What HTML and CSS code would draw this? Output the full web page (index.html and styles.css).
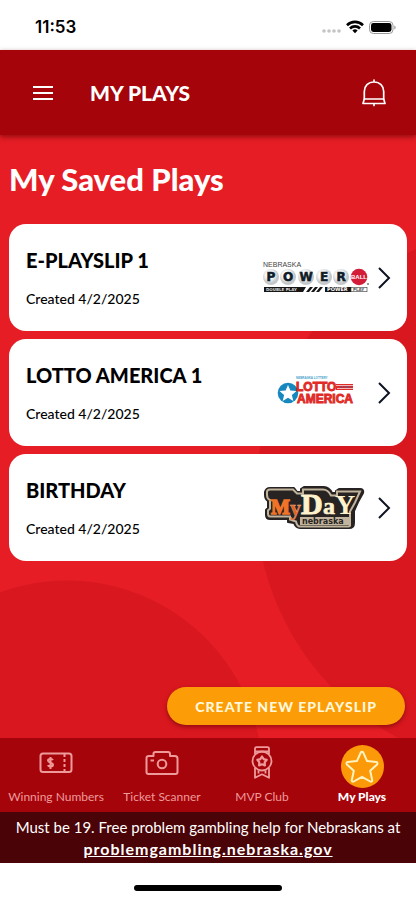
FILE: index.html
```html
<!DOCTYPE html>
<html lang="en">
<head>
    <meta charset="UTF-8">
    <meta name="viewport" content="width=device-width, initial-scale=1.0">
    <title>My Plays</title>
    <link rel="stylesheet" href="styles.css">
</head>
<body>
    <div class="status-bar">
        <span class="time">11:53</span>
        <div class="status-icons">
            <svg width="20" height="16" viewBox="0 0 20 16" fill="#c4c4c4">
                <circle cx="3" cy="12" r="1.8"/><circle cx="8" cy="12" r="1.8"/><circle cx="13" cy="12" r="1.8"/><circle cx="18" cy="12" r="1.8"/>
            </svg>
            <svg width="18" height="14" viewBox="0 0 18 14" fill="none" stroke="#000" stroke-width="2.6">
                <path d="M1 5.2a11.4 11.4 0 0 1 16 0"/>
                <path d="M4 8.5a7 7 0 0 1 10 0"/>
                <path d="M9 13.2L6.4 10.6a3.7 3.7 0 0 1 5.2 0z" fill="#000" stroke="none"/>
            </svg>
            <svg width="27" height="13" viewBox="0 0 27 13">
                <rect x=".5" y=".5" width="23.5" height="12" rx="3.8" fill="none" stroke="#999"/>
                <rect x="2" y="2" width="20.5" height="9" rx="2.4"/>
                <path d="M25.3 4.5v4c.8-.3 1.3-1.1 1.3-2s-.5-1.7-1.3-2z" fill="#999"/>
            </svg>
        </div>
    </div>

    <header class="header">
        <button class="icon-btn" aria-label="Menu">
            <svg width="20" height="14" viewBox="0 0 20 14" stroke="#fff" stroke-width="2">
                <path d="M0 1h20M0 7h20M0 13h20"/>
            </svg>
        </button>
        <h1>MY PLAYS</h1>
        <button class="icon-btn" aria-label="Notifications">
            <svg width="24" height="28" viewBox="0 0 24 28" fill="none" stroke="#fff" stroke-width="1.7" stroke-linejoin="round" stroke-linecap="round">
                <path d="M12 1v2M2.3 20v-7.500C2.300 7 6.200 3 12 3s9.700 4 9.700 9.500V20z"/>
                <path d="M2.300 20L1 24.500h22L21.700 20M12 25v1.500"/>
            </svg>
        </button>
    </header>

    <main class="content">
        <h2>My Saved Plays</h2>
        <ul class="plays">
            <li>
                <a class="card" href="#">
                    <div class="info">
                        <h3>E-PLAYSLIP 1</h3>
                        <p>Created 4/2/2025</p>
                    </div>
                    <svg class="logo" width="108" height="46" viewBox="0 0 108 46" role="img" aria-label="Nebraska Powerball">
                        <defs>
                            <radialGradient id="ball" cx=".42" cy=".38">
                                <stop offset=".45" stop-color="#fff"/>
                                <stop offset="1" stop-color="#c3c7ca"/>
                            </radialGradient>
                        </defs>
                        <text x="1" y="12" font-size="7" fill="#444">NEBRASKA</text>
                        <g fill="url(#ball)">
                            <circle cx="9" cy="22" r="8"/><circle cx="26" cy="22" r="8"/><circle cx="44" cy="22" r="8"/><circle cx="62" cy="22" r="8"/><circle cx="79" cy="22" r="8"/>
                        </g>
                        <g class="logo-wide" font-size="12" fill="#101c28" stroke="#101c28" stroke-width=".6" text-anchor="middle">
                            <text x="9" y="26">P</text><text x="26" y="26">O</text><text x="44" y="26">W</text><text x="62" y="26">E</text><text x="79" y="26">R</text>
                        </g>
                        <circle cx="97" cy="22" r="8.3" fill="#d31c37"/>
                        <text class="logo-heavy" x="97" y="24" font-size="6" fill="#fff" text-anchor="middle">BALL</text>
                        <circle cx="106" cy="29" r="1" fill="#777"/>
                        <path d="M2 32h42l-3 5H2z" fill="#151515"/>
                        <path d="M48 32h3l-4 5h-3zM53 32h3l-4 5h-3zM58 32h3l-4 5h-3z" fill="#151515"/>
                        <rect x="63" y="32" width="26" height="5" fill="#151515"/>
                        <rect x="89" y="32.3" width="16" height="4.400" fill="#fff" stroke="#333" stroke-width=".6"/>
                        <text class="logo-wide" x="4" y="36" font-size="4" fill="#ddd">DOUBLE PLAY</text>
                        <text class="logo-wide" x="65" y="36" font-size="5" fill="#fff">POWER</text>
                        <text class="logo-wide" x="91" y="36" font-size="4" fill="#555">PLAY</text>
                    </svg>
                    <svg class="chevron" width="14" height="22" viewBox="0 0 14 22"><path d="M2 1l10 10L2 21"/></svg>
                </a>
            </li>
            <li>
                <a class="card" href="#">
                    <div class="info">
                        <h3>LOTTO AMERICA 1</h3>
                        <p>Created 4/2/2025</p>
                    </div>
                    <svg class="logo" width="108" height="46" viewBox="0 0 108 46" role="img" aria-label="Lotto America">
                        <text class="logo-heavy" x="34" y="9" font-size="3" fill="#4aa3cc">NEBRASKA LOTTERY</text>
                        <circle cx="26" cy="23" r="10.3" fill="#1688bf"/>
                        <path d="M26 15l2.400 5.500 6.100.5-4.600 4 1.400 6-5.300-3.200-5.300 3.200 1.400-6-4.600-4 6.100-.5z" fill="#fff"/>
                        <g class="logo-heavy" fill="#e02b27" stroke="#e02b27" stroke-width=".9" font-size="12">
                            <text x="34" y="21">LOTTO</text>
                            <text x="35" y="33">AMERICA</text>
                        </g>
                        <path d="M74 14h17v6H74z" fill="#e02b27"/>
                        <path d="M74 15.500h17M75 18.500h16" stroke="#f3b9ba"/>
                        <path d="M78 17h12" stroke="#485b91" stroke-dasharray="2 1"/>
                    </svg>
                    <svg class="chevron" width="14" height="22" viewBox="0 0 14 22"><path d="M2 1l10 10L2 21"/></svg>
                </a>
            </li>
            <li>
                <a class="card" href="#">
                    <div class="info">
                        <h3>BIRTHDAY</h3>
                        <p>Created 4/2/2025</p>
                    </div>
                    <svg class="logo" width="108" height="46" viewBox="0 0 108 46" role="img" aria-label="MyDay Nebraska">
                        <path d="M8 3h24l3 4h4V4l3-2h20q5 0 8 6h4V6l3-2h21q4 0 3 4l-5 9-4 9v12q0 5-5 5H38q-4 0-6-5l-6-1v-3H8q-4 0-4-4v-5l2-2V16q-3-2-3-6V7q1-4 5-4z" fill="#272323" stroke="#272323" stroke-width="2" stroke-linejoin="round"/>
                        <path d="M8 4.500h23l4 4h6V4.500h20q5 0 8 6h6v-4h23l-5 11-5 9v14q0 1-3 1H38q-3 0-4-5l-6-2v-3H8q-2 0-2-3v-3l2-2V15q-3-1-3-5V7q0-2.500 3-2.500z" fill="none" stroke="#c2b49c" stroke-width="2"/>
                        <g class="logo-serif">
                            <text x="9" y="29" font-size="20" fill="#f07328" stroke="#f07328" stroke-width="1.4">M</text>
                            <text x="28" y="30" font-size="22" fill="#e06222" stroke="#f3b58c" stroke-width=".4">y</text>
                            <text x="39" y="29" font-size="30" fill="#fff2cc" stroke="#fff2cc">D</text>
                            <text x="61" y="29" font-size="24" fill="#fff2cc" stroke="#fff2cc" stroke-width=".6">a</text>
                            <text x="73" y="29" font-size="28" fill="#fff2cc">Y</text>
                        </g>
                        <rect x="38" y="32" width="50" height="8" fill="#c2b49c"/>
                        <text class="logo-wide" x="40" y="39" font-size="8" fill="#272323">nebraska</text>
                    </svg>
                    <svg class="chevron" width="14" height="22" viewBox="0 0 14 22"><path d="M2 1l10 10L2 21"/></svg>
                </a>
            </li>
        </ul>
        <button class="create-btn">CREATE NEW EPLAYSLIP</button>
    </main>

    <nav class="tabs">
        <a class="tab" href="#">
            <span class="tab-icon">
                <svg width="34" height="30" viewBox="0 0 34 30" fill="none" stroke="currentColor" stroke-width="2">
                    <rect x="1.500" y="1.500" width="31" height="18.500" rx="2.500"/>
                    <path d="M25.500 2v18" stroke-dasharray="3 2"/>
                    <path d="M14 8c-1-1.500-5-1.500-5 .6 0 2.400 5 1.600 5 4.200 0 2.300-4.200 2-5.300.4M11.500 5v12"/>
                </svg>
            </span>
            Winning Numbers
        </a>
        <a class="tab" href="#">
            <span class="tab-icon">
                <svg width="34" height="34" viewBox="0 0 34 34" fill="none" stroke="currentColor" stroke-width="2" stroke-linejoin="round">
                    <path d="M4 6h4.500V3.500C8.500 2 9.500 2 10.500 2H23c1.500 0 2 .5 2 2v2h5c1.500 0 2.500 1 2.500 2.500V22c0 1.500-1 2-2 2h-27c-1.500 0-2-1-2-2V8c0-1.300 1-2 2.500-2z"/>
                    <circle cx="17" cy="14" r="4.300"/>
                    <path d="M5.500 10.500H9"/>
                </svg>
            </span>
            Ticket Scanner
        </a>
        <a class="tab" href="#">
            <span class="tab-icon">
                <svg width="24" height="42" viewBox="0 0 24 42" fill="none" stroke="currentColor" stroke-width="1.800" stroke-linejoin="round">
                    <path d="M5 8V2.500C5 1.500 5.500 1.200 6.500 1.200h11c1 0 1.500.3 1.500 1.300V8M5 5.500h14"/>
                    <circle cx="12" cy="15" r="9.500"/>
                    <path d="M12 10.500l1.700 2.600 3 .8-2 2.400.2 3.100-2.900-1.100-2.900 1.100.2-3.100-2-2.400 3-.8z" stroke-width="2.200"/>
                    <path d="M5 22v9.800l7-3.500 7 3.500V22M8.500 24.500v3M15.500 24.500v3"/>
                </svg>
            </span>
            MVP Club
        </a>
        <a class="tab active" href="#">
            <span class="tab-icon">
                <svg width="34" height="34" viewBox="0 0 34 34" fill="none" stroke="#fff3c0" stroke-width="2" stroke-linejoin="round">
                    <path d="M15.800 2.500c.5-1 1.900-1 2.400 0l3.900 8.600 9.200 1c1.200.2 1.600 1.400.8 2.300l-6.900 6.400 2 9.300c.2 1.200-.9 2-1.900 1.400L17 26.800l-8.300 4.700c-1 .6-2.100-.2-1.900-1.400l2-9.300-6.900-6.400c-.8-.9-.4-2.100.8-2.300l9.200-1z"/>
                </svg>
            </span>
            My Plays
        </a>
    </nav>

    <footer class="footer">
        <p>Must be 19. Free problem gambling help for Nebraskans at</p>
        <a href="#">problemgambling.nebraska.gov</a>
    </footer>
    <div class="home-bar"><span></span></div>
</body>
</html>
```

FILE: styles.css
```css
* {
    box-sizing: border-box;
    margin: 0;
    padding: 0;
}
body {
    min-height: 100vh;
    display: flex;
    flex-direction: column;
    background: #fff;
    font-family: Lato, "Open Sans", sans-serif;
    color: #000;
}
a {
    color: inherit;
    text-decoration: none;
}
button {
    border: 0;
    background: none;
    font-family: inherit;
    cursor: pointer;
}
svg {
    display: block;
    flex-shrink: 0;
}
.status-bar {
    height: 50px;
    padding: 4px 20px 0 35px;
    display: flex;
    align-items: center;
    justify-content: space-between;
}
.time {
    font-family: Inter, sans-serif;
    font-size: 17px;
    font-weight: 600;
}
.status-icons {
    display: flex;
    align-items: center;
    gap: 5px;
}
.header {
    height: 85px;
    padding: 0 24px;
    display: flex;
    align-items: center;
    gap: 37px;
    background: #a5040a;
    color: #fff;
    box-shadow: 0 2px 5px rgba(90, 0, 0, 0.6);
    z-index: 1;
}
.header h1 {
    flex: 1;
    font-size: 21px;
    font-weight: 900;
}
.icon-btn {
    padding: 6px;
}
.header .icon-btn:first-child {
    padding: 6px 0 6px 9px;
}
.content {
    flex: 1;
    display: flex;
    flex-direction: column;
    padding: 23px 9px 13px;
    background:
        radial-gradient(circle at 67px 641px, #d9171f 195px, transparent 196px),
        radial-gradient(circle at 529px 363px, #d9171f 273px, transparent 274px),
        #e61d25;
}
.content h2 {
    color: #fff;
    font-size: 31px;
    line-height: 42px;
    font-weight: 900;
}
.plays {
    list-style: none;
    display: grid;
    gap: 8px;
    margin-top: 24px;
}
.card {
    height: 107px;
    padding: 0 16px 0 17px;
    display: flex;
    align-items: center;
    background: #fff;
    border-radius: 17px;
}
.info {
    flex: 1;
}
.info h3 {
    font-size: 20px;
    line-height: 26px;
    font-weight: 900;
}
.info p {
    margin-top: 16px;
    font-size: 14px;
    line-height: 20px;
    font-weight: 500;
}
.logo {
    margin-right: 7px;
    font-family: "Liberation Sans", sans-serif;
}
.logo-heavy {
    font-weight: bold;
}
.logo-wide {
    font-family: "DejaVu Sans", sans-serif;
    font-weight: bold;
}
.logo-serif {
    font-family: "Liberation Serif", serif;
    font-weight: bold;
}
.chevron {
    fill: none;
    stroke: #0d1322;
    stroke-width: 2;
}
.create-btn {
    align-self: flex-end;
    margin: auto 2px 0 0;
    height: 38px;
    padding: 0 28px;
    border-radius: 19px;
    background: #fc9d08;
    color: #fff8dc;
    font-size: 14px;
    font-weight: 900;
    letter-spacing: 1px;
    box-shadow: 0 2px 4px rgba(80, 0, 0, 0.5);
}
.tabs {
    height: 74px;
    padding-right: 4px;
    display: grid;
    grid-template-columns: 112px 1fr 1fr 1fr;
    background: #a5040a;
}
.tab {
    display: flex;
    flex-direction: column;
    align-items: center;
    padding-top: 3px;
    color: #ef9a9a;
    font-size: 12px;
    line-height: 16px;
    white-space: nowrap;
}
.tab-icon {
    width: 43px;
    height: 43px;
    margin: 4px 0 1px;
    display: flex;
    align-items: center;
    justify-content: center;
}
.active {
    color: #fff;
    font-weight: 900;
}
.active .tab-icon {
    border-radius: 50%;
    background: #fc9908;
}
.footer {
    height: 51px;
    padding-top: 5px;
    background: #4a0306;
    color: #fff;
    text-align: center;
    font-size: 15px;
    line-height: 21px;
}
.footer a {
    font-size: 16px;
    font-weight: bold;
    letter-spacing: 1px;
    text-decoration: underline;
}
.home-bar {
    height: 37px;
    padding-top: 22px;
}
.home-bar span {
    display: block;
    width: 148px;
    height: 6px;
    margin: 0 auto;
    border-radius: 3px;
    background: #000;
}
```
